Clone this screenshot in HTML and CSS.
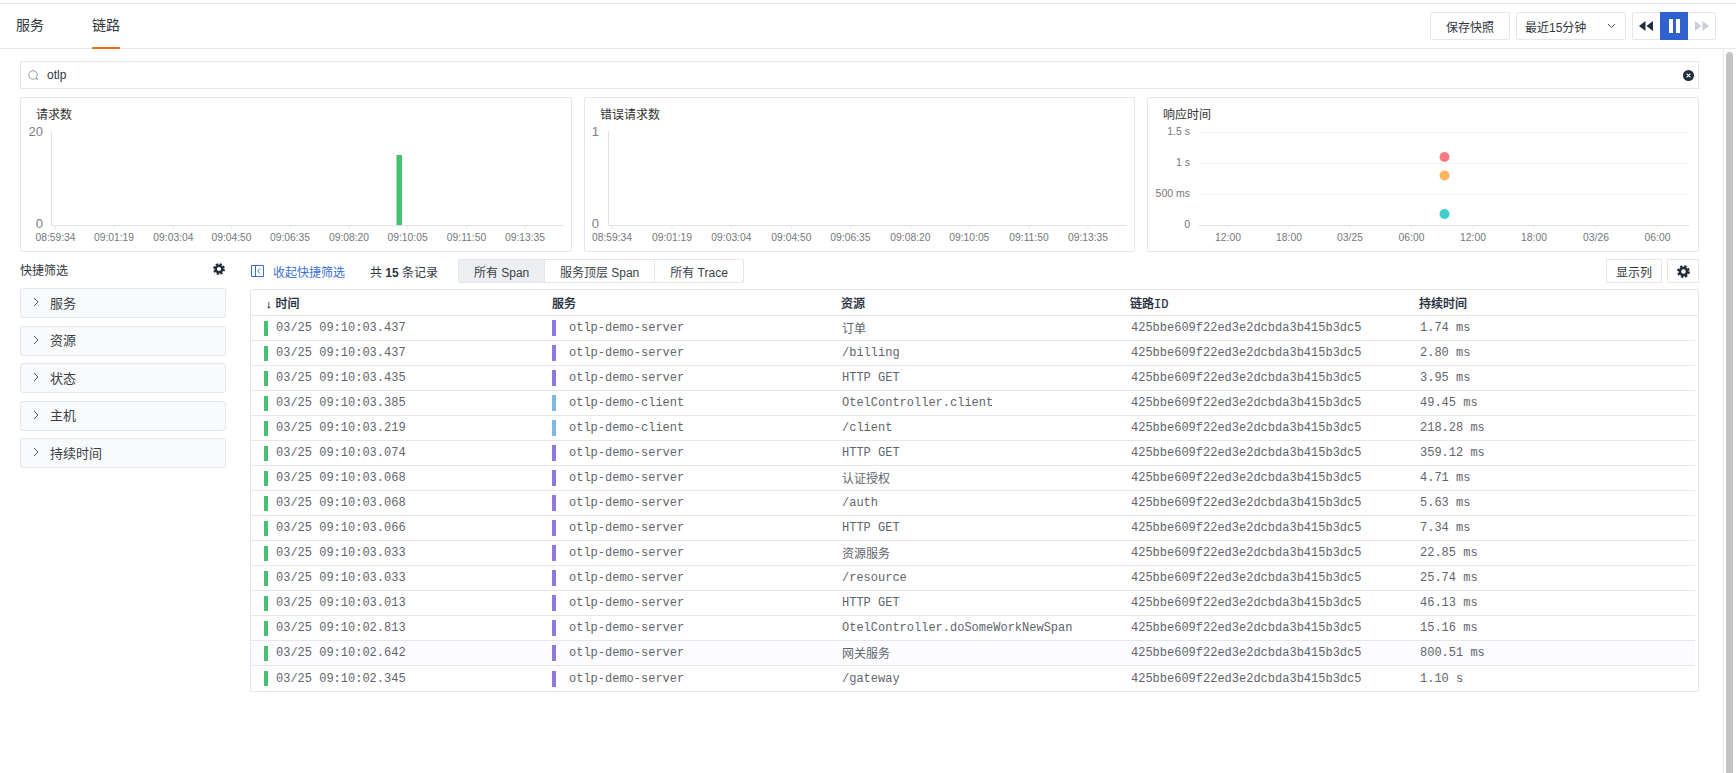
FILE: index.html
```html
<!DOCTYPE html>
<html lang="zh">
<head>
<meta charset="utf-8">
<title>链路</title>
<link rel="stylesheet" href="styles.css">
</head>
<body>
<header class="topbar">
  <nav class="tabs">
    <a class="tab">服务</a>
    <a class="tab tab-active">链路</a>
  </nav>
  <div class="controls">
    <button class="btn btn-save">保存快照</button>
    <div class="btn select"><span>最近15分钟</span>
      <svg class="caret" width="9" height="6" viewBox="0 0 9 6"><path d="M1 1 4.500 4.600 8 1" fill="none" stroke="#444" stroke-width="1"/></svg>
    </div>
    <div class="player">
      <span class="play-btn"><svg width="14" height="10" viewBox="0 0 14 10"><path d="M6.500 0v10L0 5zM14 0v10L7.500 5z" fill="#1f2d3d"/></svg></span>
      <span class="play-btn play-active"><svg width="11" height="14" viewBox="0 0 11 14"><path d="M0 0h4v14H0zM7 0h4v14H7z" fill="#fff"/></svg></span>
      <span class="play-btn"><svg width="14" height="10" viewBox="0 0 14 10"><path d="M0 0v10l6.500-5zM7.500 0v10L14 5z" fill="#c9ced8"/></svg></span>
    </div>
  </div>
</header>
<div class="page">
  <main class="content">
    <div class="search">
      <svg width="11" height="11" viewBox="0 0 11 11"><circle cx="5" cy="5" r="4.200" fill="none" stroke="#98a0aa" stroke-width="1.100"/><path d="M8 8l2 2" stroke="#98a0aa" stroke-width="1.100"/></svg>
      <span class="search-text">otlp</span>
      <svg class="search-clear" width="11" height="11" viewBox="0 0 11 11"><circle cx="5.500" cy="5.500" r="5.500" fill="#1f2d3d"/><path d="M3.600 3.600l3.800 3.800M7.400 3.600l-3.800 3.800" stroke="#fff" stroke-width="1.100"/></svg>
    </div>

    <section class="charts">
      <div class="card">
        <div class="card-title">请求数</div>
        <svg class="chart" viewBox="0 0 550 128" width="550" height="128">
          <path class="axis" d="M30.500 8V102.500H543"/>
          <path class="tick" d="M34.500 103v3M93 103v3M152.500 103v3M210.500 103v3M269 103v3M328 103v3M386.500 103v3M445.500 103v3M504 103v3"/>
          <rect class="bar" x="375.500" y="32" width="5.500" height="70"/>
          <text class="ylabel" x="22" y="12.500">20</text>
          <text class="ylabel" x="22" y="105">0</text>
          <g class="xlabels">
            <text x="34.500" y="118">08:59:34</text><text x="93" y="118">09:01:19</text><text x="152.400" y="118">09:03:04</text><text x="210.500" y="118">09:04:50</text><text x="269" y="118">09:06:35</text><text x="328" y="118">09:08:20</text><text x="386.600" y="118">09:10:05</text><text x="445.500" y="118">09:11:50</text><text x="504" y="118">09:13:35</text>
          </g>
        </svg>
      </div>
      <div class="card">
        <div class="card-title">错误请求数</div>
        <svg class="chart" viewBox="0 0 549 128" width="549" height="128">
          <path class="axis" d="M23.500 8V102.500H542"/>
          <path class="tick" d="M27 103v3M87 103v3M146.500 103v3M206.500 103v3M265.500 103v3M325.500 103v3M384.500 103v3M444 103v3M503 103v3"/>
          <text class="ylabel" x="14" y="12.500">1</text>
          <text class="ylabel" x="14" y="105">0</text>
          <g class="xlabels">
            <text x="27" y="118">08:59:34</text><text x="87" y="118">09:01:19</text><text x="146.400" y="118">09:03:04</text><text x="206.400" y="118">09:04:50</text><text x="265.400" y="118">09:06:35</text><text x="325.400" y="118">09:08:20</text><text x="384.300" y="118">09:10:05</text><text x="444" y="118">09:11:50</text><text x="503" y="118">09:13:35</text>
          </g>
        </svg>
      </div>
      <div class="card">
        <div class="card-title">响应时间</div>
        <svg class="chart" viewBox="0 0 550 128" width="550" height="128">
          <path class="grid" d="M50.500 9.500H542M50.500 40.500H542M50.500 71.500H542"/>
          <path class="axis" d="M50.500 102.500H542"/>
          <path class="tick" d="M80 103v3M141 103v3M202 103v3M263.500 103v3M325 103v3M386 103v3M448 103v3M509.500 103v3"/>
          <circle class="dot-red" cx="296.500" cy="34" r="5"/>
          <circle class="dot-orange" cx="296.500" cy="52.500" r="5"/>
          <circle class="dot-teal" cx="296.500" cy="91" r="5"/>
          <g class="yunits">
            <text x="42" y="11.500">1.5 s</text><text x="42" y="43">1 s</text><text x="42" y="74">500 ms</text><text x="42" y="105">0</text>
          </g>
          <g class="xlabels">
            <text x="80" y="118">12:00</text><text x="141" y="118">18:00</text><text x="202" y="118">03/25</text><text x="263.500" y="118">06:00</text><text x="325" y="118">12:00</text><text x="386" y="118">18:00</text><text x="448" y="118">03/26</text><text x="509.500" y="118">06:00</text>
          </g>
        </svg>
      </div>
    </section>

    <section class="lower">
      <aside class="sidebar">
        <div class="side-head">
          <span>快捷筛选</span>
          <svg width="12" height="12" viewBox="0 0 12 12"><circle cx="6" cy="6" r="3.300" fill="none" stroke="#1f2d3d" stroke-width="2.400"/><circle cx="6" cy="6" r="4.900" fill="none" stroke="#1f2d3d" stroke-width="2" stroke-dasharray="2.200 1.650"/></svg>
        </div>
        <div class="filter"><svg width="6" height="10" viewBox="0 0 6 10"><path d="M1 1l4 4-4 4" fill="none" stroke="#555" stroke-width="1"/></svg><span>服务</span></div>
        <div class="filter"><svg width="6" height="10" viewBox="0 0 6 10"><path d="M1 1l4 4-4 4" fill="none" stroke="#555" stroke-width="1"/></svg><span>资源</span></div>
        <div class="filter"><svg width="6" height="10" viewBox="0 0 6 10"><path d="M1 1l4 4-4 4" fill="none" stroke="#555" stroke-width="1"/></svg><span>状态</span></div>
        <div class="filter"><svg width="6" height="10" viewBox="0 0 6 10"><path d="M1 1l4 4-4 4" fill="none" stroke="#555" stroke-width="1"/></svg><span>主机</span></div>
        <div class="filter"><svg width="6" height="10" viewBox="0 0 6 10"><path d="M1 1l4 4-4 4" fill="none" stroke="#555" stroke-width="1"/></svg><span>持续时间</span></div>
      </aside>

      <div class="results">
        <div class="toolbar">
          <a class="collapse">
            <svg width="13" height="12" viewBox="0 0 13 12"><path d="M.5.500h12v11H.5zM4.500.500v11M9 3.500 6.800 6 9 8.500" fill="none" stroke="#3a6fd8" stroke-width="1"/></svg>
            <span>收起快捷筛选</span>
          </a>
          <span class="total">共 <b>15</b> 条记录</span>
          <div class="segments">
            <span class="seg seg-active">所有 Span</span>
            <span class="seg seg-mid">服务顶层 Span</span>
            <span class="seg seg-last">所有 Trace</span>
          </div>
          <button class="tool-btn btn-cols">显示列</button>
          <button class="tool-btn btn-gear">
            <svg width="13" height="13" viewBox="0 0 12 12"><circle cx="6" cy="6" r="3.300" fill="none" stroke="#1f2d3d" stroke-width="2.400"/><circle cx="6" cy="6" r="4.900" fill="none" stroke="#1f2d3d" stroke-width="2" stroke-dasharray="2.200 1.650"/></svg>
          </button>
        </div>

        <div class="table">
          <div class="row row-head">
            <div class="th th-time"><span class="arrow">↓</span>时间</div>
            <div class="th">服务</div>
            <div class="th">资源</div>
            <div class="th">链路<span class="mono">ID</span></div>
            <div class="th">持续时间</div>
          </div>
          <div class="row"><div class="td td-time"><i class="mark mark-green"></i>03/25 09:10:03.437</div><div class="td td-svc"><i class="mark mark-purple"></i>otlp-demo-server</div><div class="td">订单</div><div class="td">425bbe609f22ed3e2dcbda3b415b3dc5</div><div class="td">1.74 ms</div></div>
          <div class="row"><div class="td td-time"><i class="mark mark-green"></i>03/25 09:10:03.437</div><div class="td td-svc"><i class="mark mark-purple"></i>otlp-demo-server</div><div class="td">/billing</div><div class="td">425bbe609f22ed3e2dcbda3b415b3dc5</div><div class="td">2.80 ms</div></div>
          <div class="row"><div class="td td-time"><i class="mark mark-green"></i>03/25 09:10:03.435</div><div class="td td-svc"><i class="mark mark-purple"></i>otlp-demo-server</div><div class="td">HTTP GET</div><div class="td">425bbe609f22ed3e2dcbda3b415b3dc5</div><div class="td">3.95 ms</div></div>
          <div class="row"><div class="td td-time"><i class="mark mark-green"></i>03/25 09:10:03.385</div><div class="td td-svc"><i class="mark mark-blue"></i>otlp-demo-client</div><div class="td">OtelController.client</div><div class="td">425bbe609f22ed3e2dcbda3b415b3dc5</div><div class="td">49.45 ms</div></div>
          <div class="row"><div class="td td-time"><i class="mark mark-green"></i>03/25 09:10:03.219</div><div class="td td-svc"><i class="mark mark-blue"></i>otlp-demo-client</div><div class="td">/client</div><div class="td">425bbe609f22ed3e2dcbda3b415b3dc5</div><div class="td">218.28 ms</div></div>
          <div class="row"><div class="td td-time"><i class="mark mark-green"></i>03/25 09:10:03.074</div><div class="td td-svc"><i class="mark mark-purple"></i>otlp-demo-server</div><div class="td">HTTP GET</div><div class="td">425bbe609f22ed3e2dcbda3b415b3dc5</div><div class="td">359.12 ms</div></div>
          <div class="row"><div class="td td-time"><i class="mark mark-green"></i>03/25 09:10:03.068</div><div class="td td-svc"><i class="mark mark-purple"></i>otlp-demo-server</div><div class="td">认证授权</div><div class="td">425bbe609f22ed3e2dcbda3b415b3dc5</div><div class="td">4.71 ms</div></div>
          <div class="row"><div class="td td-time"><i class="mark mark-green"></i>03/25 09:10:03.068</div><div class="td td-svc"><i class="mark mark-purple"></i>otlp-demo-server</div><div class="td">/auth</div><div class="td">425bbe609f22ed3e2dcbda3b415b3dc5</div><div class="td">5.63 ms</div></div>
          <div class="row"><div class="td td-time"><i class="mark mark-green"></i>03/25 09:10:03.066</div><div class="td td-svc"><i class="mark mark-purple"></i>otlp-demo-server</div><div class="td">HTTP GET</div><div class="td">425bbe609f22ed3e2dcbda3b415b3dc5</div><div class="td">7.34 ms</div></div>
          <div class="row"><div class="td td-time"><i class="mark mark-green"></i>03/25 09:10:03.033</div><div class="td td-svc"><i class="mark mark-purple"></i>otlp-demo-server</div><div class="td">资源服务</div><div class="td">425bbe609f22ed3e2dcbda3b415b3dc5</div><div class="td">22.85 ms</div></div>
          <div class="row"><div class="td td-time"><i class="mark mark-green"></i>03/25 09:10:03.033</div><div class="td td-svc"><i class="mark mark-purple"></i>otlp-demo-server</div><div class="td">/resource</div><div class="td">425bbe609f22ed3e2dcbda3b415b3dc5</div><div class="td">25.74 ms</div></div>
          <div class="row"><div class="td td-time"><i class="mark mark-green"></i>03/25 09:10:03.013</div><div class="td td-svc"><i class="mark mark-purple"></i>otlp-demo-server</div><div class="td">HTTP GET</div><div class="td">425bbe609f22ed3e2dcbda3b415b3dc5</div><div class="td">46.13 ms</div></div>
          <div class="row"><div class="td td-time"><i class="mark mark-green"></i>03/25 09:10:02.813</div><div class="td td-svc"><i class="mark mark-purple"></i>otlp-demo-server</div><div class="td">OtelController.doSomeWorkNewSpan</div><div class="td">425bbe609f22ed3e2dcbda3b415b3dc5</div><div class="td">15.16 ms</div></div>
          <div class="row row-hover"><div class="td td-time"><i class="mark mark-green"></i>03/25 09:10:02.642</div><div class="td td-svc"><i class="mark mark-purple"></i>otlp-demo-server</div><div class="td">网关服务</div><div class="td">425bbe609f22ed3e2dcbda3b415b3dc5</div><div class="td">800.51 ms</div></div>
          <div class="row row-last"><div class="td td-time"><i class="mark mark-green"></i>03/25 09:10:02.345</div><div class="td td-svc"><i class="mark mark-purple"></i>otlp-demo-server</div><div class="td">/gateway</div><div class="td">425bbe609f22ed3e2dcbda3b415b3dc5</div><div class="td">1.10 s</div></div>
        </div>
      </div>
    </section>
  </main>
  <div class="scrolltrack"><div class="scrollthumb"></div></div>
</div>
</body>
</html>
```

FILE: styles.css
```css
* { box-sizing: border-box; }
html, body { margin: 0; height: 773px; overflow: hidden; background: #fff; }
body {
  font-family: "Liberation Sans", "Noto Sans CJK SC", sans-serif;
  font-size: 12px;
  color: #2f3640;
}
.topbar {
  margin-top: 3px;
  height: 46px;
  border-top: 1px solid #e4e7ed;
  border-bottom: 1px solid #e4e7ed;
  display: flex;
  justify-content: space-between;
  padding: 0 20px 0 16px;
}
.tabs { display: flex; gap: 48px; }
.tab {
  font-size: 14px;
  line-height: 42px;
  height: 45px;
  color: #2f3640;
}
.tab-active { border-bottom: 2px solid #f26a1b; }
.controls { display: flex; align-items: flex-start; padding-top: 8px; }
.btn {
  height: 28px;
  border: 1px solid #e4e7ed;
  border-radius: 2px;
  background: #fff;
  font: inherit;
  color: #2f3640;
}
.btn-save { width: 80px; margin-right: 6px; padding: 0; }
.select {
  width: 110px;
  margin-right: 6px;
  display: flex;
  align-items: center;
  justify-content: space-between;
  padding: 0 9px 0 8px;
}
.player {
  width: 84px;
  height: 28px;
  border: 1px solid #e4e7ed;
  border-radius: 2px;
  display: flex;
  align-items: center;
}
.play-btn {
  width: 27px;
  height: 28px;
  display: flex;
  align-items: center;
  justify-content: center;
}
.play-active { width: 29px; background: #2f62cc; }

.page { display: flex; height: 724px; }
.content { flex: 1; padding: 12px 24px 0 20px; min-width: 0; }
.scrolltrack {
  width: 13px;
  border-left: 1px solid #e4e7ed;
  padding: 3px 3px 0 2px;
}
.scrollthumb { height: 100%; background: #c4c4c4; border-radius: 4px 4px 0 0; }

.search {
  height: 28px;
  border: 1px solid #e4e7ed;
  display: flex;
  align-items: center;
  padding: 0 4px 0 7px;
}
.search-text { margin-left: 8px; color: #2f3640; }
.search-clear { margin-left: auto; }

.charts {
  margin-top: 8px;
  display: grid;
  grid-template-columns: 552px 551px 552px;
  gap: 12px;
}
.card { height: 155px; border: 1px solid #e4e7ed; border-radius: 2px; }
.card-title { height: 25px; padding: 9px 0 0 15px; line-height: 17px; color: #333; }
.chart { display: block; }
.axis { fill: none; stroke: #e1e3e8; stroke-width: 1; }
.grid { fill: none; stroke: #f2f3f5; stroke-width: 1; }
.tick { fill: none; stroke: #e6e8ec; stroke-width: 1; }
.bar { fill: #47c072; }
.ylabel { font-size: 13px; fill: #7c8087; text-anchor: end; }
.xlabels text { font-size: 10.300px; fill: #74787e; text-anchor: middle; }
.yunits text { font-size: 10.500px; fill: #74787e; text-anchor: end; }
.dot-red { fill: #fb7a82; }
.dot-orange { fill: #fdb65e; }
.dot-teal { fill: #3ccfcb; }

.lower { margin-top: 7px; display: flex; gap: 24px; }
.sidebar { width: 206px; flex: none; }
.side-head {
  height: 20px;
  margin-bottom: 9px;
  display: flex;
  align-items: center;
  justify-content: space-between;
  padding-right: 1px;
  color: #2f3640;
}
.filter {
  height: 30px;
  margin-bottom: 7.500px;
  background: #f9fafc;
  border: 1px solid #e4e7ed;
  border-radius: 3px;
  display: flex;
  align-items: center;
  padding: 0 0 2px 12px;
  font-size: 13px;
  color: #3a3f47;
}
.filter span { margin-left: 11px; }
.results { width: 1449px; }
.toolbar { height: 24px; display: flex; align-items: center; }
.collapse { display: flex; align-items: center; gap: 9px; margin-left: 1px; color: #3a6fd8; }
.total { margin-left: 25px; }
.total b { font-weight: 700; }
.segments {
  margin-left: 20px;
  display: flex;
  height: 24px;
  border: 1px solid #e4e7ed;
  border-radius: 2px;
}
.seg { display: flex; align-items: center; justify-content: center; color: #3a3f47; }
.seg-active { width: 85px; background: #eceef1; }
.seg-mid { width: 111px; border-left: 1px solid #e4e7ed; border-right: 1px solid #e4e7ed; }
.seg-last { width: 88px; }
.tool-btn {
  height: 24px;
  background: #fff;
  border: 1px solid #e4e7ed;
  font: inherit;
  color: #2f3640;
  padding: 0;
  display: flex;
  align-items: center;
  justify-content: center;
}
.btn-cols { width: 56px; margin-left: auto; }
.btn-gear { width: 32px; margin-left: 5px; }

.table {
  margin-top: 6px;
  border: 1px solid #e4e7ed;
  border-radius: 2px;
  padding-right: 3px;
}
.row {
  height: 25px;
  display: grid;
  grid-template-columns: 289px 289px 289px 289px 1fr;
  padding-left: 12px;
  align-items: center;
  border-bottom: 1px solid #e4e7ed;
  font-family: "Liberation Mono", "Noto Sans CJK SC", monospace;
  color: #5f656d;
}
.row-head {
  height: 26px;
  margin-right: -3px;
  font-family: "Liberation Sans", "Noto Sans CJK SC", sans-serif;
  font-weight: 500;
  color: #1f2d3d;
}
.row-hover { background: #fcfcfe; }
.row-last { border-bottom: 0; }
.th { -webkit-text-stroke: 0.2px #1f2d3d; }
.th-time { padding-left: 3px; }
.arrow { font-size: 11px; margin-right: 4px; }
.mono { font-family: "Liberation Mono", monospace; }
.td { display: flex; align-items: center; white-space: pre; padding-left: 1px; }
.td-time, .td-svc { padding-left: 0; }
.mark { display: block; width: 4px; }
.mark-green { height: 15px; background: #47c072; margin: 0 8px 0 1px; }
.mark-purple { height: 16px; background: #8f78e0; margin-right: 13px; }
.mark-blue { height: 16px; background: #7fb8e0; margin-right: 13px; }
```
